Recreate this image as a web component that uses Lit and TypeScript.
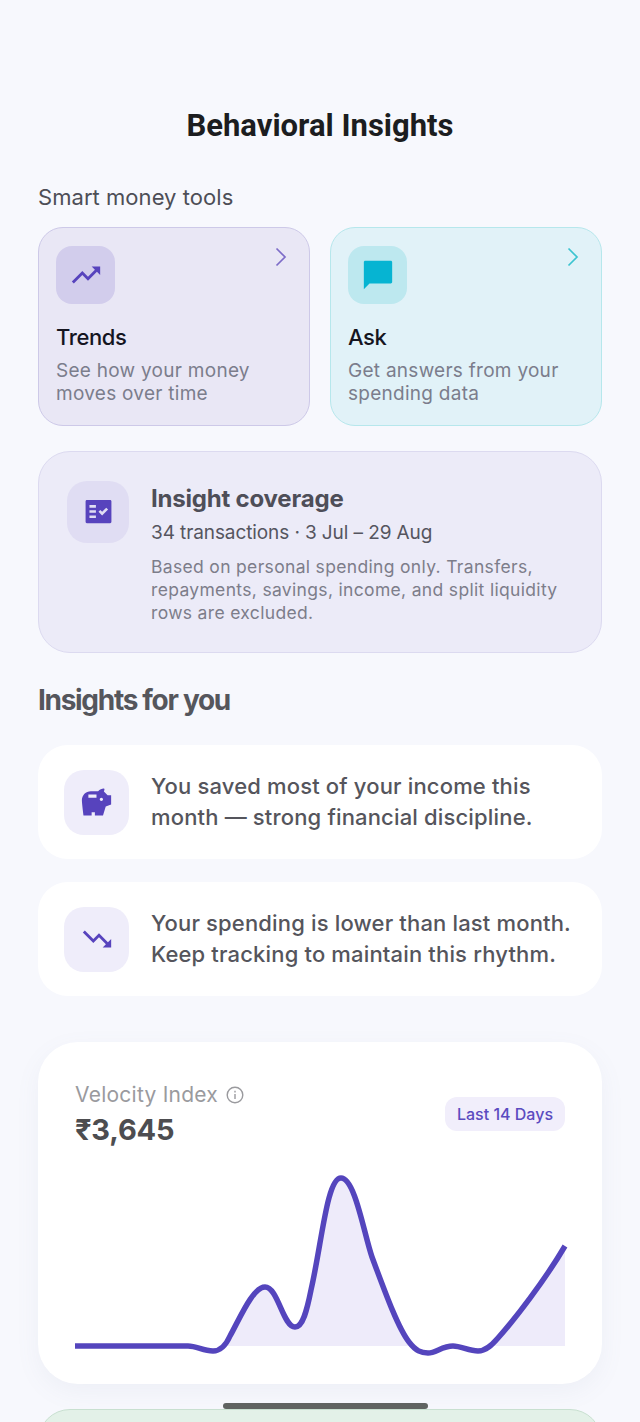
import { LitElement, html, css, svg } from "lit";
import { customElement } from "lit/decorators.js";

const icon = (d: string, size: number, color: string) => html`<svg width=${size} height=${size} viewBox="0 0 24 24" fill=${color} style="display:block">${svg`<path fill-rule="evenodd" d=${d}></path>`}</svg>`;
const chevron = (color: string) => html`<svg class="chev" width="12" height="20" viewBox="0 0 12 20" fill="none" stroke=${color} stroke-width="1.7">${svg`<path d="M1.5 1.5 L10 10 L1.5 18.5"></path>`}</svg>`;

const UP = "M16 6l2.29 2.29-4.88 4.88-4-4L2 16.59 3.41 18l6-6 4 4 6.3-6.29L22 12V6z";
const DOWN = "M16 18l2.29-2.29-4.88-4.88-4 4L2 7.41 3.41 6l6 6 4-4 6.3 6.29L22 12v6z";
const CHAT = "M21 2H3c-.55 0-1 .45-1 1v19l4-4h15c.55 0 1-.45 1-1V3c0-.55-.45-1-1-1z";
const CHECK = "M21 3H3c-.55 0-1 .45-1 1v16c0 .55.45 1 1 1h18c.55 0 1-.45 1-1V4c0-.55-.45-1-1-1zM10 17H5v-2h5v2zm0-4H5v-2h5v2zm0-4H5V7h5v2zm4.82 6L12 12.16l1.41-1.41 1.41 1.42L17.99 9l1.42 1.42L14.82 15z";
const PIG = "M18.83 7.5l-2.27-2.27c.07-.42.18-.81.32-1.15.16-.34-.11-.74-.48-.74-1.1 0-2.4.5-3.4 1.66H8.5C5.46 5 3 7.46 3 10.5 3 12.49 4 20 4 20h5v-2h2v2h5l1.68-5.59L21 13.27V7.5h-2.17zM12 9H7V7h5v2zm3 2c-.55 0-1-.45-1-1s.45-1 1-1 1 .45 1 1-.45 1-1 1z";

const LINE = "M0 176 L113 176 C122 176 128 181 138 181 C146 181 151 175 155 166 C165 148 178 117 190 117 C203 117 208 157 220 157 C228 157 232 140 236 120 C247 72 252 8 266 8 C280 8 289 64 297 87 C310 122 323 158 334 172 C341 181 346 183 353 183 C361 183 367 176 378 176 C386 176 394 181 403 181 C411 181 417 175 423 168 C440 149 470 110 490 76";

@customElement("app-root")
export class AppRoot extends LitElement {
  static styles = css`
    :host { display: block; width: 640px; height: 1422px; overflow: hidden; position: relative; background: #f7f8fd; font-family: "Inter", "Liberation Sans", sans-serif; }
    .page { display: flex; flex-direction: column; padding: 107px 38px 0; box-sizing: border-box; }
    h1 { margin: 0; font: 700 31px/38px "Roboto", sans-serif; color: #1c1d20; text-align: center; }
    .smart { margin-top: 38px; font-size: 22px; line-height: 28px; color: #4d4e56; letter-spacing: 0.05px; }
    .tools { margin-top: 16px; display: grid; grid-template-columns: 272px 272px; gap: 20px; }
    .tool { box-sizing: border-box; height: 199px; border-radius: 25px; padding: 18px 17px; border: 1.5px solid; }
    .tool.p { background: #e9e7f5; border-color: #cdc9e8; }
    .tool.c { background: #e1f2f8; border-color: #b6e7ec; }
    .top { display: flex; justify-content: space-between; align-items: flex-start; }
    .chev { margin: 1px 5px 0 0; }
    .tile { display: flex; align-items: center; justify-content: center; flex: none; }
    .tool .tile { width: 59px; height: 58px; border-radius: 16px; }
    .p .tile { background: #d2cdec; }
    .c .tile { background: #bde8ef; }
    .tool h3 { margin: 18px 0 0; font-size: 22px; line-height: 30px; font-weight: 500; color: #15151f; letter-spacing: -0.4px; }
    .tool p { margin: 7px 0 0; font-size: 19px; line-height: 23px; color: #7b7d8c; letter-spacing: 0.27px; }
    .coverage { margin-top: 25px; box-sizing: border-box; height: 202px; border-radius: 32px; border: 1.5px solid #dcdaf0; background: #ecebf8; padding: 28.5px 28px; display: flex; gap: 22px; }
    .coverage .tile { width: 62px; height: 62px; border-radius: 20px; background: #e0ddf3; }
    .coverage h3 { margin: 0; font-size: 24px; line-height: 36px; font-weight: 700; color: #4e4e58; letter-spacing: -0.2px; }
    .coverage .sub { margin-top: 1px; font-size: 19px; line-height: 30px; color: #55555f; letter-spacing: -0.1px; }
    .coverage .desc { margin-top: 7px; font-size: 17.5px; line-height: 23px; color: #7d7d8a; letter-spacing: 0.33px; }
    h2 { margin: 29px 0 0; font-size: 28px; line-height: 36px; font-weight: 700; color: #55565c; letter-spacing: -1.3px; }
    .insight { box-sizing: border-box; height: 114px; border-radius: 30px; background: #fff; padding: 0 26px; display: flex; align-items: center; gap: 22px; }
    .i1 { margin-top: 27px; }
    .i2 { margin-top: 23px; }
    .insight .tile { width: 65px; height: 65px; border-radius: 20px; background: #efedfa; }
    .insight p { margin: 0; font-size: 22px; line-height: 31px; color: #55555c; font-weight: 500; letter-spacing: 0.16px; }
    .velocity { margin-top: 46px; box-sizing: border-box; height: 342px; border-radius: 40px; background: #fff; padding: 37px; box-shadow: 0 8px 24px rgba(120, 125, 150, 0.07); }
    .vhead { display: flex; justify-content: space-between; align-items: flex-start; height: 91px; }
    .vlabel { display: flex; align-items: center; gap: 8px; font-size: 21px; line-height: 30px; color: #9a9a9e; margin-top: 1px; letter-spacing: 0.25px; }
    .value { margin-top: 1px; font-size: 29px; line-height: 38px; font-weight: 700; color: #4d4d50; letter-spacing: -0.2px; }
    .pill { margin-top: 18px; height: 34px; width: 120px; box-sizing: border-box; border-radius: 12px; background: #f1eefb; color: #5b4bc0; font-size: 16px; font-weight: 500; display: flex; align-items: center; justify-content: center; }
    .chart { display: block; overflow: visible; }
    .green { margin-top: 25px; height: 100px; border-radius: 32px; background: #e3f1e8; border: 1.5px solid #c8e0d0; box-sizing: border-box; }
    .home { position: absolute; left: 223px; top: 1403px; width: 205px; height: 6px; border-radius: 3px; background: #5f6361; }
  `;

  render() {
    return html`
      <div class="page">
        <h1>Behavioral Insights</h1>
        <div class="smart">Smart money tools</div>
        <div class="tools">
          <div class="tool p">
            <div class="top"><div class="tile">${icon(UP, 34, "#5743bd")}</div>${chevron("#7d6cc8")}</div>
            <h3>Trends</h3>
            <p>See how your money<br />moves over time</p>
          </div>
          <div class="tool c">
            <div class="top"><div class="tile">${icon(CHAT, 34, "#06b4d2")}</div>${chevron("#3cc4d0")}</div>
            <h3>Ask</h3>
            <p>Get answers from your<br />spending data</p>
          </div>
        </div>
        <div class="coverage">
          <div class="tile">${icon(CHECK, 31, "#5743bd")}</div>
          <div>
            <h3>Insight coverage</h3>
            <div class="sub">34 transactions · 3 Jul – 29 Aug</div>
            <div class="desc">Based on personal spending only. Transfers,<br />repayments, savings, income, and split liquidity<br />rows are excluded.</div>
          </div>
        </div>
        <h2>Insights for you</h2>
        <div class="insight i1">
          <div class="tile">${icon(PIG, 39, "#5743bd")}</div>
          <p>You saved most of your income this<br />month — strong financial discipline.</p>
        </div>
        <div class="insight i2">
          <div class="tile">${icon(DOWN, 34, "#5743bd")}</div>
          <p>Your spending is lower than last month.<br />Keep tracking to maintain this rhythm.</p>
        </div>
        <div class="velocity">
          <div class="vhead">
            <div>
              <div class="vlabel">Velocity Index
                <svg width="18" height="18" viewBox="0 0 18 18" fill="none" stroke="#9a9a9e" stroke-width="1.4">
                  <circle cx="9" cy="9" r="7.8"></circle><path d="M9 8v5"></path><path d="M9 4.8v1.6"></path>
                </svg>
              </div>
              <div class="value">₹3,645</div>
            </div>
            <div class="pill">Last 14 Days</div>
          </div>
          <svg class="chart" width="490" height="190" viewBox="0 0 490 190" fill="none">
            <defs><clipPath id="base"><rect x="0" y="0" width="490" height="176"></rect></clipPath></defs>
            <path d="${LINE} L490 176 L0 176 Z" fill="#eeebfa" clip-path="url(#base)"></path>
            <path d=${LINE} stroke="#5445bd" stroke-width="5.5"></path>
          </svg>
        </div>
        <div class="green"></div>
      </div>
      <div class="home"></div>
    `;
  }
}
